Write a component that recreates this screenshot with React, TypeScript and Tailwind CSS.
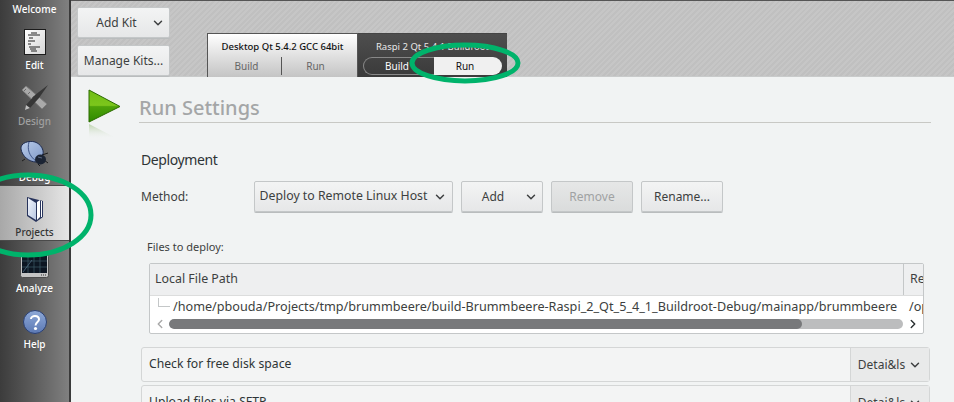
import React from 'react';
import { ChevronDown, ChevronLeft, ChevronRight } from 'lucide-react';

const font = { fontFamily: '"Noto Sans", sans-serif' };

const EditIcon = () => (
  <svg width="22" height="26" viewBox="0 0 22 26">
    <defs>
      <linearGradient id="page" x1="0" y1="0" x2="1" y2="1">
        <stop offset="0" stopColor="#ffffff" />
        <stop offset="1" stopColor="#d4d4d4" />
      </linearGradient>
    </defs>
    <rect x="0.5" y="0.5" width="21" height="25" fill="url(#page)" stroke="#1c1c1c" />
    <path d="M7 4h6M4 6h12M5 9h4M4 12h7M4 15h3M5 18h11M6 20h6M7 22h6" stroke="#222" strokeWidth="1" />
  </svg>
);

const DesignIcon = () => (
  <svg width="28" height="26" viewBox="0 0 28 26">
    <path d="M1 5 L5 1 L26 19 L21 24Z" fill="#a9a9a9" stroke="#7c7c7c" />
    <path d="M5 4 l-2 2M9 7 l-2 2M13 11 l-2 2" stroke="#6c6c6c" />
    <path d="M27 0 L14 10 L5 20 L4 25 L9 23 L18 13Z" fill="#363636" />
    <path d="M5 20 L4 25 L9 23Z" fill="#c0c0c0" />
  </svg>
);

const DebugIcon = () => (
  <svg width="29" height="26" viewBox="0 0 29 26">
    <defs>
      <linearGradient id="shell" x1="0" y1="0" x2="1" y2="1">
        <stop offset="0" stopColor="#b9cbe8" />
        <stop offset="1" stopColor="#7f99c8" />
      </linearGradient>
    </defs>
    <path d="M22 14l6-2M24 19l4 3M18 23l2 2M5 18l-3 2" stroke="#1c1c1c" strokeWidth="1" />
    <path d="M1 8 C0 2 9 -1 15 1 C21 3 24 9 23 13 L16 21 C9 21 2 15 1 8Z" fill="url(#shell)" stroke="#1e2c50" />
    <path d="M9 1 C7 8 9 15 16 20" stroke="#3f5688" fill="none" />
    <ellipse cx="20.5" cy="18.5" rx="5.5" ry="5" fill="#1b2434" />
    <path d="M18 16 l4 1" stroke="#5a6a86" />
  </svg>
);

const ProjectsIcon = () => (
  <svg width="18" height="27" viewBox="0 0 18 27">
    <defs>
      <linearGradient id="cover" x1="0" y1="0" x2="1" y2="1">
        <stop offset="0" stopColor="#f2f5fb" />
        <stop offset="1" stopColor="#b9c8e4" />
      </linearGradient>
    </defs>
    <path d="M1 1 L17 5 V21 L10 26 L1 20Z" fill="#28345c" />
    <path d="M2 2 L10 7 L10 24 L2 19Z" fill="url(#cover)" />
    <path d="M11 6 L14 4 V21 L11 24Z" fill="#fff" />
    <path d="M15.5 5 V21" stroke="#fff" strokeWidth="1" />
  </svg>
);

const AnalyzeIcon = () => (
  <svg width="29" height="24" viewBox="0 0 29 24">
    <rect x="0.5" y="0.5" width="28" height="23" rx="2" fill="#c4c4c4" stroke="#4c4c4c" />
    <rect x="2" y="1" width="25" height="18" fill="#0d1622" />
    <path d="M2 7h25M2 13h25M8 1v18M14 1v18M20 1v18" stroke="#3c5a66" strokeWidth="0.7" />
    <path d="M3 18 L12 6" stroke="#5a7a90" strokeWidth="0.7" />
    <path d="M21 21h1M23 21h1M25 21h1" stroke="#333" />
  </svg>
);

const HelpIcon = () => (
  <svg width="24" height="24" viewBox="0 0 24 24">
    <defs>
      <linearGradient id="help" x1="0" y1="0" x2="0" y2="1">
        <stop offset="0" stopColor="#8ea9d8" />
        <stop offset="1" stopColor="#5c79b4" />
      </linearGradient>
    </defs>
    <circle cx="12" cy="12" r="11.5" fill="url(#help)" stroke="#2b3f70" />
    <path d="M8 9 C8 5 16 5 16 9.5 C16 12 12.5 12 12.5 15.5" fill="none" stroke="#fff" strokeWidth="2" />
    <circle cx="12.5" cy="18.5" r="1.6" fill="#fff" />
  </svg>
);

const RunIcon = () => (
  <svg width="34" height="50" viewBox="0 0 34 50">
    <defs>
      <linearGradient id="run" x1="0" y1="0" x2="0" y2="1">
        <stop offset="0" stopColor="#6fbd14" />
        <stop offset="0.48" stopColor="#7cc61c" />
        <stop offset="0.52" stopColor="#4fa30a" />
        <stop offset="1" stopColor="#2e8a00" />
      </linearGradient>
      <linearGradient id="refl" x1="0" y1="0" x2="0" y2="1">
        <stop offset="0" stopColor="#9bbf80" stopOpacity="0.6" />
        <stop offset="1" stopColor="#f1f3f3" stopOpacity="0" />
      </linearGradient>
    </defs>
    <path d="M1 1 L32 17.5 L1 33Z" fill="url(#run)" stroke="#2b6a00" />
    <path d="M1 35 L26 48 L1 50Z" fill="url(#refl)" />
  </svg>
);

function NavItem({ icon, label, dim }: { icon: React.ReactNode; label: string; dim?: boolean }) {
  return (
    <div className="h-[56px] flex flex-col items-center justify-end">
      {icon}
      <span className={`text-[10px] font-medium leading-[14px] mt-[3px] mb-[2px] ${dim ? 'text-[#a0a0a0]' : 'text-white'}`}>{label}</span>
    </div>
  );
}

function Btn({ children, className = '' }: { children: React.ReactNode; className?: string }) {
  return (
    <div className={`h-[31px] flex items-center justify-center border border-[#c4c7c8] rounded-[2px] bg-gradient-to-b from-[#f3f4f4] to-[#e6e7e8] shadow-[0_1px_0_#b9bcbd] text-[12px] text-[#3d3f40] ${className}`}>
      {children}
    </div>
  );
}

function StepRow({ label }: { label: string }) {
  return (
    <div className="h-[35px] shrink-0 flex items-stretch border border-[#d4d6d6] rounded-[3px] bg-[#f3f4f4]">
      <span className="flex-1 flex items-center pl-[7px] text-[12.2px] text-[#2e3436]">{label}</span>
      <div className="w-[79px] flex items-center justify-center gap-[3px] border-l border-[#d4d6d6] bg-[#e9eaea] text-[12px] text-[#3d3f40]">
        Detai&amp;ls <ChevronDown size={14} strokeWidth={2.5} />
      </div>
    </div>
  );
}

export default function App() {
  return (
    <div className="relative w-[954px] h-[402px] overflow-hidden flex bg-[#f1f3f3]" style={font}>
      <aside className="w-[71px] shrink-0 h-full border-r-2 border-[#3a3a3a] bg-gradient-to-r from-[#3c3c3c] to-[#808080] flex flex-col">
        <div className="h-[18px] flex items-center justify-center text-[10px] font-medium text-white leading-[14px]">Welcome</div>
        <NavItem icon={<EditIcon />} label="Edit" />
        <NavItem icon={<DesignIcon />} label="Design" dim />
        <NavItem icon={<DebugIcon />} label="Debug" />
        <div className="h-[56px] -mt-[1px] flex flex-col items-center justify-end border-y border-[#4a4a4a] bg-gradient-to-r from-[#a8a8a8] to-[#e6e6e6]">
          <ProjectsIcon />
          <span className="text-[10px] font-medium leading-[14px] mt-[2px] mb-[1px] text-[#333]">Projects</span>
        </div>
        <NavItem icon={<AnalyzeIcon />} label="Analyze" />
        <NavItem icon={<HelpIcon />} label="Help" />
      </aside>

      <main className="flex-1 min-w-0 flex flex-col">
        <header className="h-[77px] shrink-0 border-t border-[#555] border-b border-b-[#c9cbcb] bg-[repeating-linear-gradient(135deg,#c0c0c0_0px,#c0c0c0_2px,#c6c6c6_2px,#c6c6c6_4px)] flex">
          <div className="w-[99px] pl-[6px] pt-[6px] flex flex-col gap-[7px]">
            <Btn className="w-[93px] relative pr-[14px]">
              Add Kit
              <ChevronDown size={14} strokeWidth={2.5} className="absolute right-[4px]" />
            </Btn>
            <Btn className="w-[93px]">Manage Kits...</Btn>
          </div>
          <div className="ml-[37px] mt-[32px] h-[44px] flex">
            <div className="w-[151px] border border-b-0 border-[#555] bg-gradient-to-b from-white to-[#c4c4c4] flex flex-col">
              <div className="h-[23px] pt-[4px] flex items-center justify-center text-[9.5px] font-medium text-[#111]">Desktop Qt 5.4.2 GCC 64bit</div>
              <div className="flex-1 flex text-[10px] text-[#666] pb-[2px]">
                <span className="w-[74px] pl-[4px] flex items-center justify-center border-r border-[#555]">Build</span>
                <span className="flex-1 pr-[8px] flex items-center justify-center">Run</span>
              </div>
            </div>
            <div className="w-[149px] border-t border-[#444] bg-gradient-to-b from-[#4e4e4e] to-[#3a3a3a] flex flex-col">
              <div className="h-[23px] pt-[4px] flex items-center justify-center text-[9.5px] text-[#e8e8e8]">Raspi 2 Qt 5.4.1 Buildroot</div>
              <div className="h-[18px] mx-[5px] flex text-[10px]">
                <span className="w-[71px] pr-[4px] flex items-center justify-center border border-r-0 border-[#888] rounded-l-full text-white">Build</span>
                <span className="flex-1 pr-[6px] flex items-center justify-center bg-[#f0f0f0] rounded-r-full text-[#111]">Run</span>
              </div>
            </div>
          </div>
        </header>

        <div className="flex-1 min-h-0 pl-[17px] pr-[23px] flex flex-col overflow-hidden">
          <div className="h-[58px] shrink-0 flex">
            <div className="pt-[12px]"><RunIcon /></div>
            <div className="ml-[17px] flex-1 h-[46px] border-b border-[#c8c8c4] flex items-end">
              <span className="text-[20px] font-medium leading-[28px] text-[#a4a6a7]">Run Settings</span>
            </div>
          </div>
          <div className="pl-[53px] flex flex-col">
            <h2 className="mt-[13px] text-[14px] tracking-[-0.4px] leading-[24px] text-[#2e3436]">Deployment</h2>
            <div className="mt-[9px] flex items-center text-[12px] text-[#3d3f40]">
              <span className="w-[113px]">Method:</span>
              <Btn className="w-[199px] gap-[6px] !text-[12.3px]">Deploy to Remote Linux Host <ChevronDown size={14} strokeWidth={2.5} /></Btn>
              <Btn className="w-[82px] ml-[8px] relative pr-[18px]">Add<ChevronDown size={14} strokeWidth={2.5} className="absolute right-[4px]" /></Btn>
              <Btn className="w-[82px] ml-[8px] !text-[#a0a2a3] !from-[#e6e7e7] !to-[#dadcdc]">Remove</Btn>
              <Btn className="w-[82px] ml-[8px]">Rename...</Btn>
            </div>
            <div className="mt-[27px] ml-[6px] text-[11px] leading-[16px] text-[#3d3f40]">Files to deploy:</div>
          </div>
          <div className="ml-[61px] mt-[8px] w-[775px] h-[71px] shrink-0 border border-[#c4c7c8] rounded-[2px] bg-white overflow-hidden flex flex-col">
            <div className="h-[32px] shrink-0 flex bg-[#eeeff0] border-b border-[#dcdddd] text-[12.4px] text-[#3d3f40]">
              <span className="w-[754px] shrink-0 flex items-center pl-[5px] border-r border-[#c4c7c8]">Local File Path</span>
              <span className="flex items-center pl-[6px]">Re</span>
            </div>
            <div className="h-[21px] shrink-0 flex items-center text-[12.65px] text-[#3d3f40] whitespace-nowrap">
              <span className="ml-[8px] mb-[9px] w-[12px] h-[9px] border-l border-b border-[#c4c7c8] shrink-0" />
              <span className="ml-[3px] w-[736px] shrink-0">/home/pbouda/Projects/tmp/brummbeere/build-Brummbeere-Raspi_2_Qt_5_4_1_Buildroot-Debug/mainapp/brummbeere</span>
              <span>/op</span>
            </div>
            <div className="h-[14px] shrink-0 flex items-center">
              <ChevronLeft size={14} strokeWidth={2.5} className="ml-[3px] text-[#aaa]" />
              <div className="ml-[2px] w-[734px] h-[10px] rounded-full bg-[#bcbdbe] overflow-hidden">
                <div className="w-[633px] h-full rounded-full bg-[#78797b]" />
              </div>
              <ChevronRight size={14} strokeWidth={2.5} className="text-[#2e3436] ml-[3px]" />
            </div>
          </div>
          <div className="ml-[53px] mt-[13px] w-[789px] flex flex-col gap-[3px]">
            <StepRow label="Check for free disk space" />
            <StepRow label="Upload files via SFTP" />
          </div>
        </div>
      </main>

      <svg className="absolute left-0 top-0 pointer-events-none" width="954" height="402">
        <ellipse cx="28" cy="215" rx="63" ry="40" fill="none" stroke="#00b36b" strokeWidth="5" />
        <ellipse cx="465" cy="63" rx="53" ry="18" fill="none" stroke="#00b36b" strokeWidth="5" />
      </svg>
    </div>
  );
}
